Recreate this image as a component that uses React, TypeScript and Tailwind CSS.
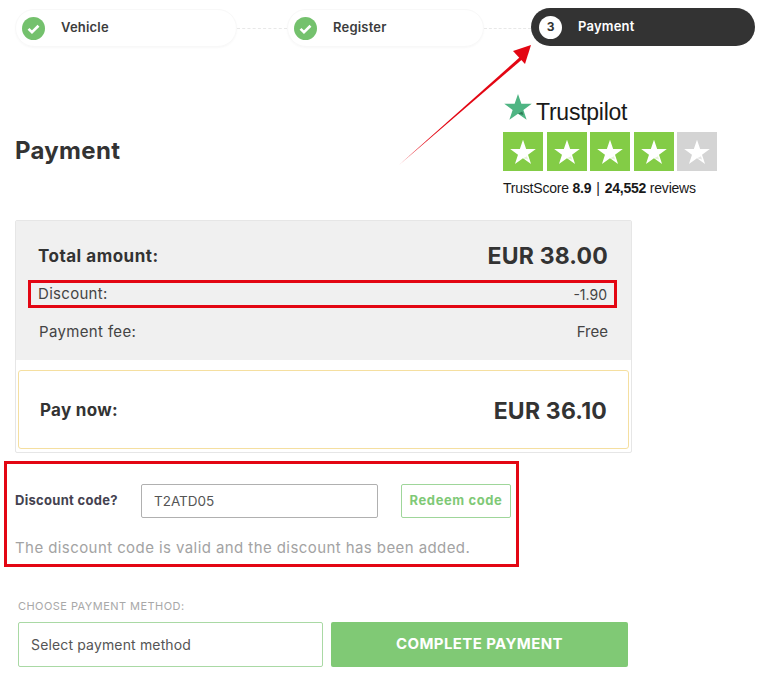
const font = { fontFamily: 'Inter, "Open Sans", sans-serif' }

const StarPath = 'M12 1.5l2.7 7.9h8.3l-6.7 4.9 2.6 7.9L12 17.4l-6.9 4.8 2.6-7.9L1 9.4h8.3z'

const CheckCircle = () => (
  <svg viewBox="0 0 24 24" className="w-[23px] h-[23px] shrink-0">
    <circle cx="12" cy="12" r="12" fill="#74c16d" />
    <path d="M6.8 12.4l3.6 3.4 6.8-6.6" fill="none" stroke="#fff" strokeWidth="2.8" />
  </svg>
)

const DoneStep = ({ label, width }: { label: string; width: string }) => (
  <div className={`${width} h-[38px] shrink-0 flex items-center pl-[6px] gap-[16px] rounded-full border border-[#f8f8f8] shadow-[0_1px_2px_rgba(0,0,0,0.03)]`}>
    <CheckCircle />
    <span className="text-[13px] font-semibold text-[#3c3c3c] tracking-[0.2px]">{label}</span>
  </div>
)

const TrustStar = ({ on }: { on: boolean }) => (
  <div className={`w-10 h-[39px] flex items-center justify-center ${on ? 'bg-[#83cc46]' : 'bg-[#d4d4d4]'}`}>
    <svg viewBox="0 0 24 24" className="w-[28px] h-[28px]">
      <path d={StarPath} fill="#fff" />
      <path d="M15.4 15.6l.9 2.8-4.3-1z" fill={on ? '#e4f3d6' : '#e6e6e6'} />
    </svg>
  </div>
)

const App = () => {
  return (
    <div style={font} className="relative w-[768px] h-[684px] overflow-hidden bg-white text-[#333333]">
      <div className="flex items-center pl-[15px] pt-[9px]">
        <DoneStep label="Vehicle" width="w-[222px]" />
        <div className="w-[50px] border-t border-dashed border-[#e8e8e8]" />
        <DoneStep label="Register" width="w-[197px]" />
        <div className="w-[47px] border-t border-dashed border-[#e8e8e8]" />
        <div className="w-[224px] h-[38px] -mt-[2px] shrink-0 flex items-center pl-[8px] gap-[16px] rounded-full bg-[#333333]">
          <div className="w-[23px] h-[23px] rounded-full bg-white flex items-center justify-center text-[12px] font-bold text-[#333333]">3</div>
          <span className="text-[13px] font-semibold text-white tracking-[0.2px]">Payment</span>
        </div>
      </div>

      <div className="flex justify-between pl-[15px] pr-[51px] pt-[47px]">
        <h1 className="mt-[42px] text-[24px] leading-[30px] font-bold text-[#333333] tracking-[0.3px]">Payment</h1>
        <div className="w-[214px]">
          <div className="flex items-end h-[30px]">
            <svg viewBox="0 0 24 24" className="w-[30px] h-[30px] shrink-0 -mt-[2px] mb-[2px]">
              <path d={StarPath} fill="#4fb583" />
              <path d="M15.4 15.6l.9 2.8-4.3-1z" fill="#2f7d58" />
            </svg>
            <span className="ml-[3px] -mb-[2px] text-[23px] leading-[28px] font-medium tracking-[-0.25px] text-[#191919]" style={{ fontFamily: '"Liberation Sans", sans-serif' }}>Trustpilot</span>
          </div>
          <div className="mt-[8px] flex justify-between">
            <TrustStar on />
            <TrustStar on />
            <TrustStar on />
            <TrustStar on />
            <TrustStar on={false} />
          </div>
          <p className="mt-[9px] text-[14px] leading-[16px] whitespace-nowrap text-[#191919] tracking-[-0.22px]" style={{ fontFamily: '"Liberation Sans", sans-serif' }}>
            TrustScore <b>8.9</b>
            <span className="mx-[5px]">|</span>
            <b>24,552</b> reviews
          </p>
        </div>
      </div>

      <div className="mt-[24px] ml-[15px] w-[617px] h-[233px] border border-[#e6e6e6] rounded-[2px]">
        <div className="h-[139px] bg-[#f0f0f0] pt-[19px]">
          <div className="flex items-center justify-between pl-[22px] pr-[23px] h-[33px]">
            <span className="text-[17px] font-bold text-[#333333] tracking-[0.5px]">Total amount:</span>
            <span className="text-[23px] font-bold text-[#333333] tracking-[0.2px]">EUR 38.00</span>
          </div>
          <div className="mt-[7px] mx-[12px] h-[28px] w-[589px] border-[3px] border-[#e30613] flex items-center justify-between pl-[7px] pr-[7px]">
            <span className="text-[15px] text-[#444444] tracking-[0.3px]">Discount:</span>
            <span className="text-[14px] text-[#444444]">-1.90</span>
          </div>
          <div className="mt-[12px] flex items-center justify-between px-[23px] h-[24px]">
            <span className="text-[15px] text-[#444444] tracking-[0.35px]">Payment fee:</span>
            <span className="text-[15px] text-[#444444]">Free</span>
          </div>
        </div>
        <div className="mt-[10px] mx-[2px] h-[79px] flex items-center justify-between pl-[21px] pr-[21px] pt-[3px] border border-[#f5dfa0] rounded-[3px]">
          <span className="text-[17px] font-bold text-[#333333] tracking-[0.3px]">Pay now:</span>
          <span className="text-[23px] font-bold text-[#333333] tracking-[0.2px]">EUR 36.10</span>
        </div>
      </div>

      <div className="mt-[8px] ml-[4px] w-[515px] h-[106px] border-[3px] border-[#e30613] pl-[8px] pt-[20px]">
        <div className="flex items-center">
          <span className="w-[126px] text-[13px] font-bold text-[#444250] tracking-[0.3px]">Discount code?</span>
          <div className="w-[237px] h-[34px] flex items-center pl-[12px] border border-[#b0b0b0] rounded-[2px] text-[13.5px] text-[#555555]">T2ATD05</div>
          <div className="ml-[23px] w-[110px] h-[34px] flex items-center justify-center border border-[#9fd69a] rounded-[2px] text-[13px] font-bold text-[#7fc977] tracking-[0.6px]">Redeem code</div>
        </div>
        <p className="mt-[21px] text-[15px] leading-[18px] whitespace-nowrap text-[#a3a3a3] tracking-[0.42px]">The discount code is valid and the discount has been added.</p>
      </div>

      <div className="mt-[32px] ml-[18px] text-[11px] leading-[14px] text-[#a8a8a8] tracking-[0.45px]">CHOOSE PAYMENT METHOD:</div>
      <div className="mt-[9px] ml-[18px] flex gap-[8px]">
        <div className="w-[305px] h-[45px] flex items-center pl-[12px] border border-[#a9d9a4] rounded-[2px] text-[14px] text-[#555555] tracking-[0.15px]">Select payment method</div>
        <div className="w-[297px] h-[45px] flex items-center justify-center bg-[#80c975] rounded-[2px] text-[15px] font-bold text-white tracking-[0.4px]">COMPLETE PAYMENT</div>
      </div>

      <svg className="absolute left-[395px] top-[38px] w-[145px] h-[130px]" viewBox="0 0 145 130">
        <path d="M4 127L125 19l2 2.4z" fill="#e30613" />
        <path d="M136 7l-6 19-12-13z" fill="#e30613" />
      </svg>
    </div>
  )
}

export default App
